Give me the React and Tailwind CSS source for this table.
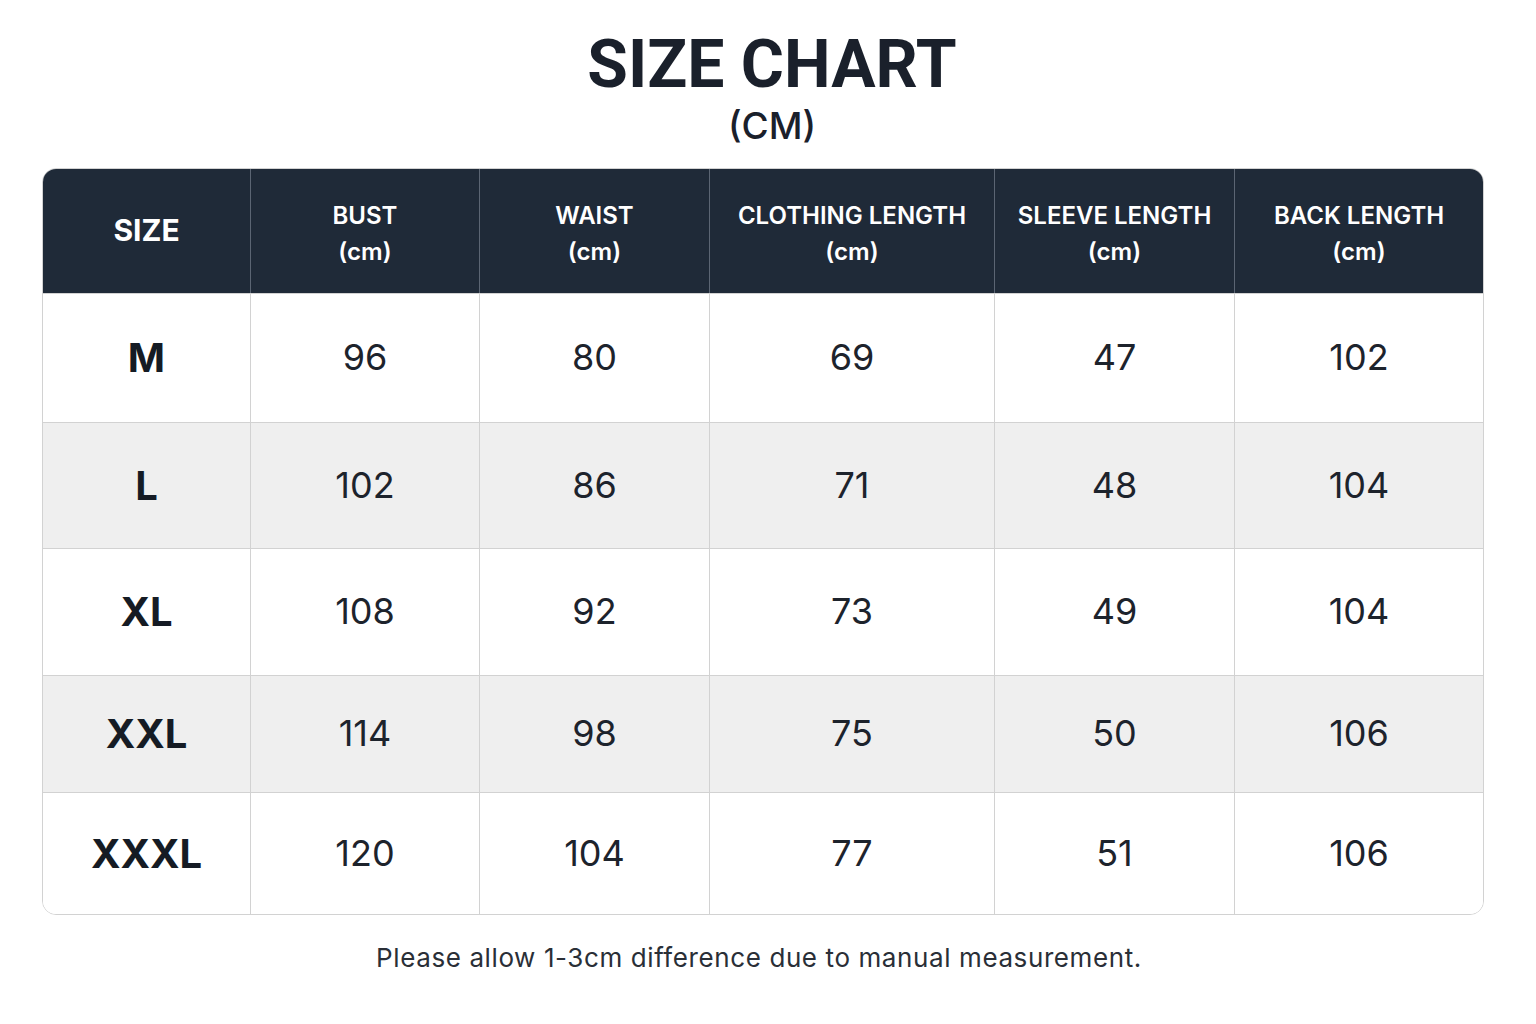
import React from 'react';

const columns = [
    { label: 'SIZE', unit: null, width: 'w-[207px]' },
    { label: 'BUST', unit: '(cm)', width: 'w-[229px]' },
    { label: 'WAIST', unit: '(cm)', width: 'w-[230px]' },
    { label: 'CLOTHING LENGTH', unit: '(cm)', width: 'w-[285px]' },
    { label: 'SLEEVE LENGTH', unit: '(cm)', width: 'w-[240px]' },
    { label: 'BACK LENGTH', unit: '(cm)', width: 'flex-1' },
];

const rows = [
    { size: 'M', values: [96, 80, 69, 47, 102], h: 'h-[129px]', bg: 'bg-white' },
    { size: 'L', values: [102, 86, 71, 48, 104], h: 'h-[126px]', bg: 'bg-[#efefef]' },
    { size: 'XL', values: [108, 92, 73, 49, 104], h: 'h-[127px]', bg: 'bg-white' },
    { size: 'XXL', values: [114, 98, 75, 50, 106], h: 'h-[117px]', bg: 'bg-[#efefef]' },
    { size: 'XXXL', values: [120, 104, 77, 51, 106], h: 'h-[122px]', bg: 'bg-white' },
];

export default function App() {
    return (
        <div className="w-[1536px] h-[1024px] bg-white text-[#1a202b] font-['Inter','Noto_Sans',sans-serif] flex flex-col items-center pr-[10px]">
            {/* Title */}
            <h1 className="mt-[28px] ml-[18px] font-['Roboto','Inter',sans-serif] text-[66px] leading-[74px] font-bold text-[#1a202b]">SIZE CHART</h1>
            <div className="mt-[2px] ml-[18px] text-[37px] leading-[44px] font-medium">(CM)</div>

            {/* Table */}
            <div className="mt-[20px] w-[1442px] rounded-[14px] border border-[#d2d2d2] overflow-hidden">
                <div className="flex h-[124px] bg-[#1f2a38] text-white">
                    {columns.map((c, i) => (
                        <div key={c.label} className={`${c.width} ${i > 0 ? 'border-l border-[#5b6573]' : ''} flex flex-col items-center justify-center font-semibold pt-[6px]`}>
                            {c.unit ? (
                                <>
                                    <span className="text-[24px] leading-[36px]">{c.label}</span>
                                    <span className="text-[24px] leading-[36px]">{c.unit}</span>
                                </>
                            ) : (
                                <span className="text-[30px] leading-[36px] font-bold -mt-[8px]">{c.label}</span>
                            )}
                        </div>
                    ))}
                </div>
                {rows.map((r) => (
                    <div key={r.size} className={`flex ${r.h} ${r.bg} border-t border-[#d2d2d2]`}>
                        <div className="w-[207px] flex items-center justify-center text-[40px] font-bold text-[#151b24]">{r.size}</div>
                        {r.values.map((v, j) => (
                            <div key={j} className={`${columns[j + 1].width} border-l border-[#d2d2d2] flex items-center justify-center text-[36px] font-normal text-[#1d232c] pb-[2px]`}>
                                {v}
                            </div>
                        ))}
                    </div>
                ))}
            </div>

            <p className="mt-[26px] mr-[8px] text-[26px] leading-[34px] text-[#2a2f37] tracking-[0.6px]">
                Please allow 1-3cm difference due to manual measurement.
            </p>
        </div>
    );
}
